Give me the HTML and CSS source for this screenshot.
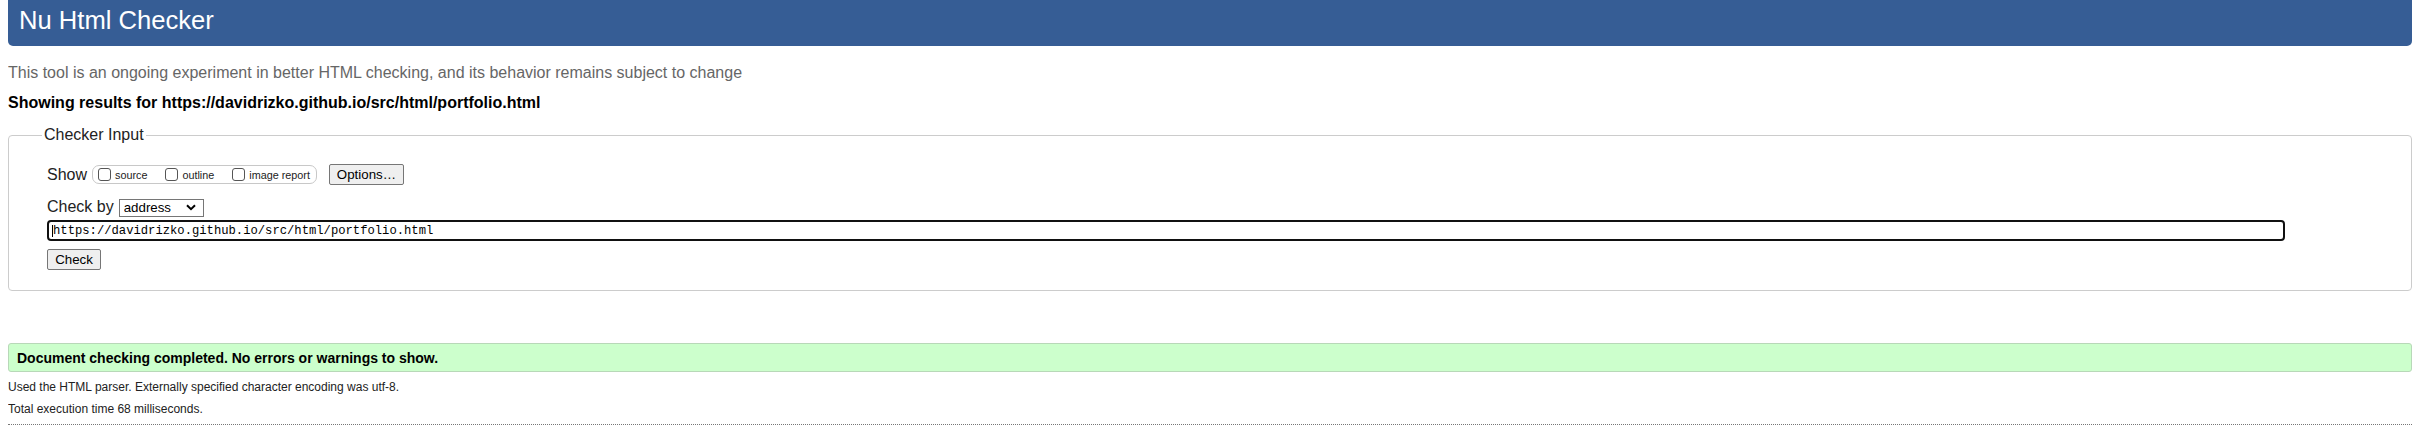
FILE: index.html
```html
<!DOCTYPE html>
<html lang="en">
<head>
<meta charset="utf-8">
<title>Nu Html Checker</title>
<link rel="stylesheet" href="styles.css">
</head>
<body>
<header class="masthead"><h1 class="title">Nu Html Checker</h1></header>
<p class="intro">This tool is an ongoing experiment in better HTML checking, and its behavior remains subject to change</p>
<p class="showing">Showing results for https://davidrizko.github.io/src/html/portfolio.html</p>
<form class="checker-form">
  <fieldset class="checker">
    <legend class="legend">Checker Input</legend>
    <div class="row show-row">
      <span class="row-label">Show</span>
      <span class="opts">
        <label class="opt"><input type="checkbox" class="box"><span>source</span></label>
        <label class="opt"><input type="checkbox" class="box"><span>outline</span></label>
        <label class="opt"><input type="checkbox" class="box"><span>image report</span></label>
      </span>
      <button type="button" class="btn options-btn">Options…</button>
    </div>
    <div class="row by-row">
      <span class="row-label">Check by</span>
      <span class="select-wrap">
        <select class="select"><option>address</option></select>
        <svg class="chev" width="10" height="7" viewBox="0 0 10 7"><path d="M1 1.2 L5 5.2 L9 1.2" fill="none" stroke="#000" stroke-width="2"/></svg>
      </span>
    </div>
    <div class="url"><span class="caret"></span>https://davidrizko.github.io/src/html/portfolio.html</div>
    <button type="button" class="btn check-btn">Check</button>
  </fieldset>
</form>
<div class="success">Document checking completed. No errors or warnings to show.</div>
<p class="meta meta-first">Used the HTML parser. Externally specified character encoding was utf-8.</p>
<p class="meta">Total execution time 68 milliseconds.</p>
<div class="dots"></div>
</body>
</html>
```
FILE: styles.css
```css
html, body {
  background: #fff;
}
body {
  margin: 0 8px;
  font-family: "Liberation Sans", Arial, sans-serif;
  font-size: 16px;
  color: #000;
}
.masthead {
  height: 46px;
  background: #365d95;
  border-radius: 0 0 5px 5px;
  padding-left: 11px;
}
.title {
  margin: 0;
  font-size: 25.6px;
  font-weight: normal;
  line-height: 40px;
  color: #fff;
}
.intro {
  margin: 18px 0 0;
  line-height: 18px;
  color: #666;
}
.showing {
  margin: 12px 0 0;
  line-height: 18px;
  font-weight: bold;
}
.checker-form {
  margin: 14px 0 0;
}
.checker {
  margin: 0;
  border: 1px solid #ccc;
  border-radius: 4px;
  padding: 20px 20px 20px 38px;
  min-width: 0;
}
.legend {
  margin-left: -5px;
  padding: 0 2px;
  font-size: 16px;
  line-height: 18px;
  color: #222;
}
.row {
  display: flex;
  align-items: center;
}
.row-label {
  font-size: 16px;
  color: #222;
}
.show-row {
  height: 21px;
  margin-bottom: 12px;
}
.opts {
  display: inline-flex;
  align-items: center;
  height: 19px;
  box-sizing: border-box;
  border: 1px solid #c8c8c8;
  border-radius: 7px;
  margin-left: 5px;
  padding: 0 6px 0 5px;
  gap: 18px;
}
.opt {
  display: inline-flex;
  align-items: center;
  gap: 4px;
  font-size: 10.8px;
  color: #222;
}
.box {
  appearance: none;
  -webkit-appearance: none;
  margin: 0;
  width: 13px;
  height: 13px;
  box-sizing: border-box;
  border: 1px solid #555;
  border-radius: 3px;
  background: #fff;
}
.btn {
  font-family: "Liberation Sans", Arial, sans-serif;
  font-size: 13.3px;
  color: #000;
  background: #efefef;
  border: 1px solid #767676;
  border-radius: 2px;
  padding: 0 6px;
  height: 21px;
  box-sizing: border-box;
}
.options-btn {
  margin-left: 12px;
  width: 75px;
}
.by-row {
  height: 20px;
  margin-bottom: 3px;
}
.select-wrap {
  position: relative;
  display: inline-block;
  margin-left: 5px;
  height: 18px;
}
.select {
  appearance: none;
  -webkit-appearance: none;
  width: 85px;
  height: 18px;
  box-sizing: border-box;
  border: 1px solid #767676;
  border-radius: 0;
  background: #fff;
  font-family: "Liberation Sans", Arial, sans-serif;
  font-size: 13.3px;
  color: #000;
  padding: 0 0 0 4px;
  line-height: 16px;
}
.chev {
  position: absolute;
  right: 8px;
  top: 6px;
  pointer-events: none;
}
.url {
  display: flex;
  align-items: center;
  width: 2238px;
  height: 21px;
  box-sizing: border-box;
  border: 2px solid #111;
  border-radius: 4px;
  padding-left: 3px;
  margin-bottom: 8px;
  font-family: "Liberation Mono", "Courier New", monospace;
  font-size: 12.2px;
  color: #000;
  white-space: nowrap;
}
.caret {
  display: inline-block;
  width: 1px;
  height: 12px;
  background: #000;
}
.check-btn {
  width: 54px;
  height: 21px;
  display: block;
}
.success {
  margin-top: 52px;
  height: 29px;
  box-sizing: border-box;
  background: #ccffcc;
  border: 1px solid #b8d8b8;
  border-radius: 3px;
  padding-left: 8px;
  display: flex;
  align-items: center;
  font-size: 14px;
  font-weight: bold;
}
.meta {
  margin: 0;
  font-size: 12px;
  line-height: 16px;
  color: #222;
}
.meta-first {
  margin-top: 7px;
}
.meta + .meta {
  margin-top: 6px;
}
.dots {
  margin-top: 7px;
  border-top: 1px dotted #777;
}
```
